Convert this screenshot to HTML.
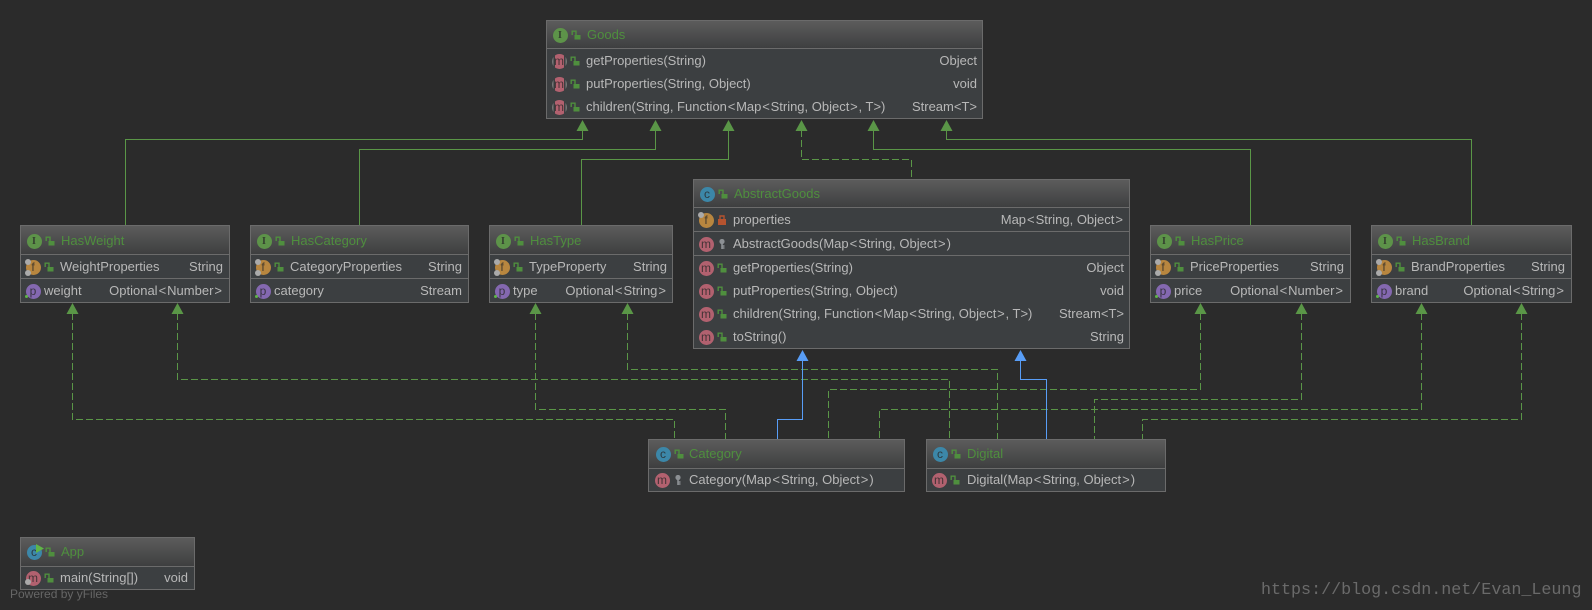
<!DOCTYPE html>
<html><head><meta charset="utf-8"><title>Goods diagram</title>
<style>
html,body{margin:0;padding:0;background:#2b2b2b}
body{position:relative;width:1592px;height:610px;overflow:hidden;font:13px/16px "Liberation Sans",Arial,sans-serif;color:#b8b8b8}
.b{position:absolute;box-sizing:border-box;border:1px solid #6b6b6b;background:#3c3f41}
.h{position:absolute;left:0;right:0;top:0;background:linear-gradient(#5c5c5c,#3e3f40);border-bottom:1px solid #6b6b6b;box-sizing:border-box}
.s{position:absolute;left:0;right:0;height:1px;background:#6b6b6b}
.t,.r,.g{position:absolute;white-space:nowrap}
.g{color:#4f8f3e}
i{font-style:normal;margin:0 1px}
i.j{margin:0 .8px}
.c{position:absolute;margin:-.5px;width:15px;height:15px;border-radius:50%;font:12px/14px "Liberation Sans",sans-serif;text-align:center;color:rgba(40,40,40,.8)}
.I{background:#5d9349;font:bold 10px/15px "Liberation Serif",serif}
.C{background:#3c87a8}
.m{background:#b2616f}
.M{background:linear-gradient(90deg,#777 0 1.5px,#3c3f41 1.5px 3px,#b2616f 3px 12px,#3c3f41 12px 13.500px,#777 13.500px)}
.f{background:#b8863f}
.p{background:#8468b0}
.x{position:absolute;width:10px;height:10px;overflow:visible}
.d{position:absolute;border-radius:50%}
.e{width:6px;height:6px;background:#aaa}
</style></head><body>
<svg width="1592" height="610" style="position:absolute;left:0;top:0" shape-rendering="crispEdges">
<defs>
<symbol id="lk" viewBox="0 0 10 10"><rect x="3.500" y="5" width="6" height="4.500" fill="#4f8f3e"/><path d="M1.200 5V1.200H5V5" fill="none" stroke="#4f8f3e" stroke-width="1.400"/></symbol>
<symbol id="pv" viewBox="0 0 10 10"><rect x="1" y="4" width="8" height="6" fill="#b5532f"/><path d="M3 4V1H7V4" fill="none" stroke="#b5532f" stroke-width="1.400"/></symbol>
<symbol id="ky" viewBox="0 0 10 10"><circle cx="5" cy="2.500" r="2.600" fill="#8c9094"/><path d="M5 4V10M5 7H7.500M5 9H7.500" stroke="#8c9094" stroke-width="1.600" fill="none"/></symbol>
</defs>
<g fill="none" stroke="#5a9647">
<path d="M582.500 130V139.500H125.500V225"/>
<path d="M655.500 130V149.500H359.500V225"/>
<path d="M728.500 130V159.500H581.500V225"/>
<path d="M873.500 130V149.500H1250.500V225"/>
<path d="M946.500 130V139.500H1471.500V225"/>
<g stroke-dasharray="7 3">
<path d="M801.500 130V159.500H911.500V179"/>
<path d="M72.500 313V419.500H674.500V439"/>
<path d="M177.500 313V379.500H949.500V439"/>
<path d="M535.500 313V409.500H725.500V439"/>
<path d="M627.500 313V369.500H997.500V439"/>
<path d="M1200.500 313V389.500H828.500V439"/>
<path d="M1301.500 313V399.500H1094.500V439"/>
<path d="M1421.500 313V409.500H879.500V439"/>
<path d="M1521.500 313V419.500H1142.500V439"/>
</g>
</g>
<g fill="none" stroke="#589df6">
<path d="M802.500 360V419.500H777.500V439"/>
<path d="M1020.500 360V379.500H1046.500V439"/>
</g>
<g shape-rendering="auto" fill="#5a9647">
<path d="M582.500 120l6 11h-12z"/><path d="M655.500 120l6 11h-12z"/><path d="M728.500 120l6 11h-12z"/><path d="M801.500 120l6 11h-12z"/><path d="M873.500 120l6 11h-12z"/><path d="M946.500 120l6 11h-12z"/>
<path d="M72.500 303l6 11h-12z"/><path d="M177.500 303l6 11h-12z"/><path d="M535.500 303l6 11h-12z"/><path d="M627.500 303l6 11h-12z"/><path d="M1200.500 303l6 11h-12z"/><path d="M1301.500 303l6 11h-12z"/><path d="M1421.500 303l6 11h-12z"/><path d="M1521.500 303l6 11h-12z"/>
</g>
<g shape-rendering="auto" fill="#589df6">
<path d="M802.500 350l6 11h-12z"/><path d="M1020.500 350l6 11h-12z"/>
</g>
</svg>

<!-- Goods -->
<div class="b" style="left:546px;top:20px;width:437px;height:99px"><div class="h" style="height:28px"></div></div>
<div class="c I" style="left:553px;top:28px">I</div><svg class="x" style="left:571px;top:30px"><use href="#lk"/></svg><div class="g" style="left:587px;top:27px">Goods</div>
<div class="c M" style="left:552px;top:54px">m</div><svg class="x" style="left:570px;top:56px"><use href="#lk"/></svg><div class="t" style="left:586px;top:53px">getProperties(String)</div><div class="r" style="right:615px;top:53px">Object</div>
<div class="c M" style="left:552px;top:77px">m</div><svg class="x" style="left:570px;top:79px"><use href="#lk"/></svg><div class="t" style="left:586px;top:76px">putProperties(String, Object)</div><div class="r" style="right:615px;top:76px">void</div>
<div class="c M" style="left:552px;top:100px">m</div><svg class="x" style="left:570px;top:102px"><use href="#lk"/></svg><div class="t" style="left:586px;top:99px">children(String, Function<i class="j">&lt;</i>Map<i class="j">&lt;</i>String, Object<i class="j">&gt;</i>, T&gt;)</div><div class="r" style="right:615px;top:99px">Stream&lt;T&gt;</div>

<!-- HasWeight -->
<div class="b" style="left:20px;top:225px;width:210px;height:78px"><div class="h" style="height:29px"></div><div class="s" style="top:52px"></div></div>
<div class="c I" style="left:27px;top:234px">I</div><svg class="x" style="left:45px;top:236px"><use href="#lk"/></svg><div class="g" style="left:61px;top:233px">HasWeight</div>
<div class="c f" style="left:26px;top:260px">f</div><div class="d e" style="left:25px;top:259px"></div><div class="d e" style="left:25px;top:270px"></div><svg class="x" style="left:44px;top:262px"><use href="#lk"/></svg><div class="t" style="left:60px;top:259px">WeightProperties</div><div class="r" style="right:1369px;top:259px">String</div>
<div class="c p" style="left:26px;top:284px">p</div><div class="d" style="left:25px;top:295px;width:3px;height:3px;background:#5fb548"></div><div class="t" style="left:44px;top:283px">weight</div><div class="r" style="right:1369px;top:283px">Optional<i>&lt;</i>Number<i>&gt;</i></div>

<!-- HasCategory -->
<div class="b" style="left:250px;top:225px;width:219px;height:78px"><div class="h" style="height:29px"></div><div class="s" style="top:52px"></div></div>
<div class="c I" style="left:257px;top:234px">I</div><svg class="x" style="left:275px;top:236px"><use href="#lk"/></svg><div class="g" style="left:291px;top:233px">HasCategory</div>
<div class="c f" style="left:256px;top:260px">f</div><div class="d e" style="left:255px;top:259px"></div><div class="d e" style="left:255px;top:270px"></div><svg class="x" style="left:274px;top:262px"><use href="#lk"/></svg><div class="t" style="left:290px;top:259px">CategoryProperties</div><div class="r" style="right:1130px;top:259px">String</div>
<div class="c p" style="left:256px;top:284px">p</div><div class="d" style="left:255px;top:295px;width:3px;height:3px;background:#5fb548"></div><div class="t" style="left:274px;top:283px">category</div><div class="r" style="right:1130px;top:283px">Stream</div>

<!-- HasType -->
<div class="b" style="left:489px;top:225px;width:184px;height:78px"><div class="h" style="height:29px"></div><div class="s" style="top:52px"></div></div>
<div class="c I" style="left:496px;top:234px">I</div><svg class="x" style="left:514px;top:236px"><use href="#lk"/></svg><div class="g" style="left:530px;top:233px">HasType</div>
<div class="c f" style="left:495px;top:260px">f</div><div class="d e" style="left:494px;top:259px"></div><div class="d e" style="left:494px;top:270px"></div><svg class="x" style="left:513px;top:262px"><use href="#lk"/></svg><div class="t" style="left:529px;top:259px">TypeProperty</div><div class="r" style="right:925px;top:259px">String</div>
<div class="c p" style="left:495px;top:284px">p</div><div class="d" style="left:494px;top:295px;width:3px;height:3px;background:#5fb548"></div><div class="t" style="left:513px;top:283px">type</div><div class="r" style="right:925px;top:283px">Optional<i>&lt;</i>String<i>&gt;</i></div>

<!-- AbstractGoods -->
<div class="b" style="left:693px;top:179px;width:437px;height:170px"><div class="h" style="height:28px"></div><div class="s" style="top:51px"></div><div class="s" style="top:75px"></div></div>
<div class="c C" style="left:700px;top:187px">c</div><svg class="x" style="left:718px;top:189px"><use href="#lk"/></svg><div class="g" style="left:734px;top:186px">AbstractGoods</div>
<div class="c f" style="left:699px;top:213px">f</div><div class="d e" style="left:698px;top:212px"></div><svg class="x" style="left:717px;top:215px"><use href="#pv"/></svg><div class="t" style="left:733px;top:212px">properties</div><div class="r" style="right:468px;top:212px">Map<i>&lt;</i>String, Object<i>&gt;</i></div>
<div class="c m" style="left:699px;top:237px">m</div><svg class="x" style="left:717px;top:239px"><use href="#ky"/></svg><div class="t" style="left:733px;top:236px">AbstractGoods(Map<i>&lt;</i>String, Object<i>&gt;</i>)</div>
<div class="c m" style="left:699px;top:261px">m</div><svg class="x" style="left:717px;top:263px"><use href="#lk"/></svg><div class="t" style="left:733px;top:260px">getProperties(String)</div><div class="r" style="right:468px;top:260px">Object</div>
<div class="c m" style="left:699px;top:284px">m</div><svg class="x" style="left:717px;top:286px"><use href="#lk"/></svg><div class="t" style="left:733px;top:283px">putProperties(String, Object)</div><div class="r" style="right:468px;top:283px">void</div>
<div class="c m" style="left:699px;top:307px">m</div><svg class="x" style="left:717px;top:309px"><use href="#lk"/></svg><div class="t" style="left:733px;top:306px">children(String, Function<i class="j">&lt;</i>Map<i class="j">&lt;</i>String, Object<i class="j">&gt;</i>, T&gt;)</div><div class="r" style="right:468px;top:306px">Stream&lt;T&gt;</div>
<div class="c m" style="left:699px;top:330px">m</div><svg class="x" style="left:717px;top:332px"><use href="#lk"/></svg><div class="t" style="left:733px;top:329px">toString()</div><div class="r" style="right:468px;top:329px">String</div>

<!-- HasPrice -->
<div class="b" style="left:1150px;top:225px;width:201px;height:78px"><div class="h" style="height:29px"></div><div class="s" style="top:52px"></div></div>
<div class="c I" style="left:1157px;top:234px">I</div><svg class="x" style="left:1175px;top:236px"><use href="#lk"/></svg><div class="g" style="left:1191px;top:233px">HasPrice</div>
<div class="c f" style="left:1156px;top:260px">f</div><div class="d e" style="left:1155px;top:259px"></div><div class="d e" style="left:1155px;top:270px"></div><svg class="x" style="left:1174px;top:262px"><use href="#lk"/></svg><div class="t" style="left:1190px;top:259px">PriceProperties</div><div class="r" style="right:248px;top:259px">String</div>
<div class="c p" style="left:1156px;top:284px">p</div><div class="d" style="left:1155px;top:295px;width:3px;height:3px;background:#5fb548"></div><div class="t" style="left:1174px;top:283px">price</div><div class="r" style="right:248px;top:283px">Optional<i>&lt;</i>Number<i>&gt;</i></div>

<!-- HasBrand -->
<div class="b" style="left:1371px;top:225px;width:201px;height:78px"><div class="h" style="height:29px"></div><div class="s" style="top:52px"></div></div>
<div class="c I" style="left:1378px;top:234px">I</div><svg class="x" style="left:1396px;top:236px"><use href="#lk"/></svg><div class="g" style="left:1412px;top:233px">HasBrand</div>
<div class="c f" style="left:1377px;top:260px">f</div><div class="d e" style="left:1376px;top:259px"></div><div class="d e" style="left:1376px;top:270px"></div><svg class="x" style="left:1395px;top:262px"><use href="#lk"/></svg><div class="t" style="left:1411px;top:259px">BrandProperties</div><div class="r" style="right:27px;top:259px">String</div>
<div class="c p" style="left:1377px;top:284px">p</div><div class="d" style="left:1376px;top:295px;width:3px;height:3px;background:#5fb548"></div><div class="t" style="left:1395px;top:283px">brand</div><div class="r" style="right:27px;top:283px">Optional<i>&lt;</i>String<i>&gt;</i></div>

<!-- Category -->
<div class="b" style="left:648px;top:439px;width:257px;height:53px"><div class="h" style="height:29px"></div></div>
<div class="c C" style="left:656px;top:447px">c</div><svg class="x" style="left:674px;top:449px"><use href="#lk"/></svg><div class="g" style="left:689px;top:446px">Category</div>
<div class="c m" style="left:655px;top:473px">m</div><svg class="x" style="left:673px;top:475px"><use href="#ky"/></svg><div class="t" style="left:689px;top:472px">Category(Map<i>&lt;</i>String, Object<i>&gt;</i>)</div>

<!-- Digital -->
<div class="b" style="left:926px;top:439px;width:240px;height:53px"><div class="h" style="height:29px"></div></div>
<div class="c C" style="left:933px;top:447px">c</div><svg class="x" style="left:951px;top:449px"><use href="#lk"/></svg><div class="g" style="left:967px;top:446px">Digital</div>
<div class="c m" style="left:932px;top:473px">m</div><svg class="x" style="left:950px;top:475px"><use href="#lk"/></svg><div class="t" style="left:967px;top:472px">Digital(Map<i>&lt;</i>String, Object<i>&gt;</i>)</div>

<!-- App -->
<div class="b" style="left:20px;top:537px;width:175px;height:53px"><div class="h" style="height:29px"></div></div>
<div class="c C" style="left:27px;top:545px">c</div><svg style="position:absolute;left:36px;top:544px;width:8px;height:9px"><path d="M0 0L8 4.500L0 9z" fill="#5fb548"/></svg><svg class="x" style="left:45px;top:547px"><use href="#lk"/></svg><div class="g" style="left:61px;top:544px">App</div>
<div class="c m" style="left:26px;top:571px">m</div><div class="d e" style="left:25px;top:579px"></div><svg class="x" style="left:44px;top:573px"><use href="#lk"/></svg><div class="t" style="left:60px;top:570px">main(String[])</div><div class="r" style="right:1404px;top:570px">void</div>

<div class="t" style="left:10px;top:586px;font-size:12px;color:#666">Powered by yFiles</div>
<div class="t" style="left:1261px;top:582px;font:16.7px/18px 'Liberation Mono',monospace;color:#6a6a6a">https://blog.csdn.net/Evan_Leung</div>
</body></html>
